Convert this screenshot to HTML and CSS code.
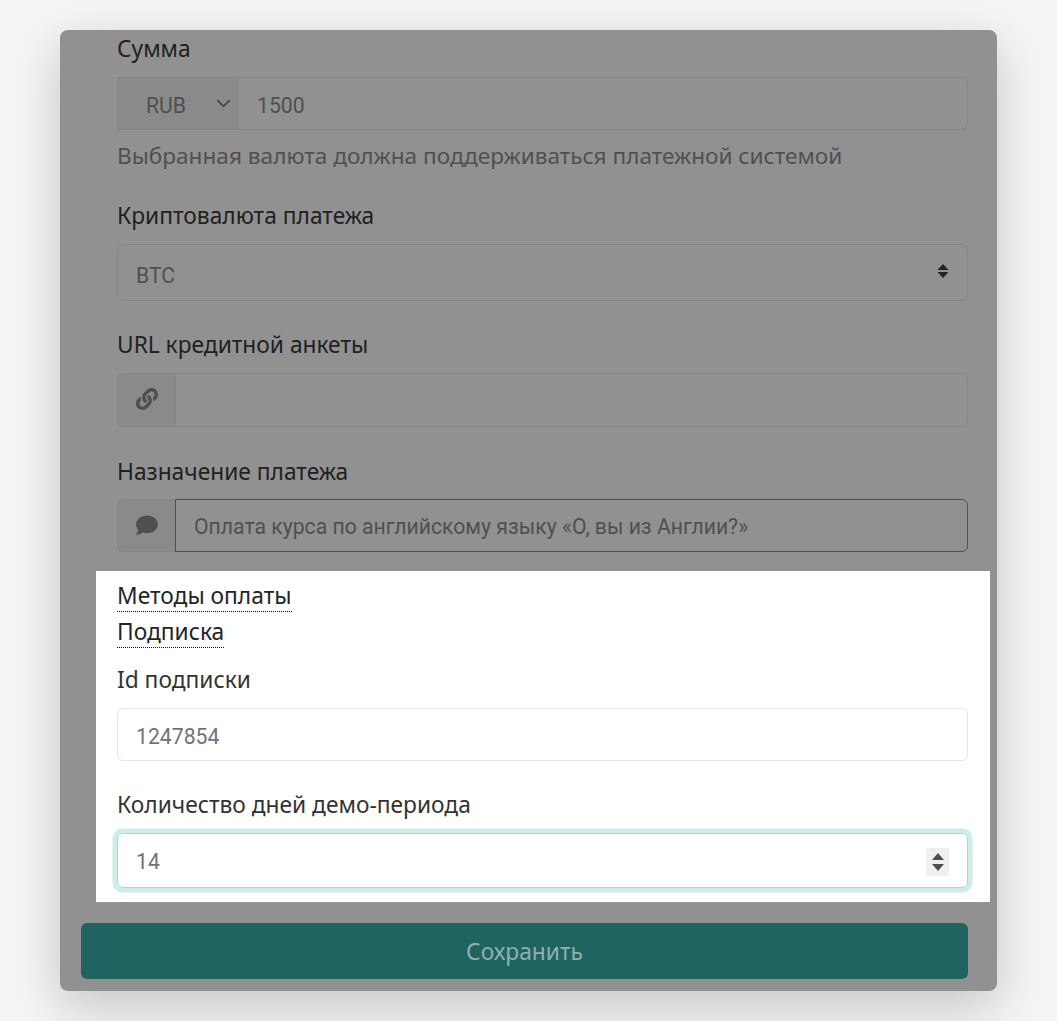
FILE: index.html
```html
<!DOCTYPE html>
<html lang="ru">
<head>
<meta charset="utf-8">
<title>Платеж</title>
<link rel="stylesheet" href="styles.css">
</head>
<body>
<main class="card">
  <section class="dim">
    <div class="field first">
      <div class="label">Сумма</div>
      <div class="group g-amount">
        <div class="addon currency"><span>RUB</span>
          <svg class="chev" viewBox="0 0 16 16" width="16" height="16"><path d="M2 5l6 6 6-6" fill="none" stroke="#4f4f4f" stroke-width="2.400" stroke-linecap="round" stroke-linejoin="round"/></svg>
        </div>
        <div class="input joined low">1500</div>
      </div>
      <div class="help">Выбранная валюта должна поддерживаться платежной системой</div>
    </div>
    <div class="field f-crypto">
      <div class="label">Криптовалюта платежа</div>
      <div class="select-box"><span class="select-value">BTC</span>
        <svg class="updown" viewBox="0 0 12 16" width="12" height="16"><path d="M6 1l5.500 6h-11zM6 15L.5 9h11z" fill="#222"/></svg>
      </div>
    </div>
    <div class="field f-url">
      <div class="label">URL кредитной анкеты</div>
      <div class="group g-url">
        <div class="addon icon">
          <svg viewBox="0 0 512 512" width="22" height="22"><path fill="#4f4f4f" d="M326.600 185.400c59.700 59.800 58.900 155.700.4 214.600l-.4.400-67.200 67.200c-59.300 59.300-155.700 59.300-215 0s-59.300-155.700 0-215l37.100-37.100c9.800-9.800 26.800-3.300 27.300 10.600.6 17.700 3.800 35.500 9.700 52.600 2 5.800.6 12.200-3.700 16.500l-13.100 13.100c-28 28-28.900 73.700-1.200 102 28 28.500 74 28.700 102.200.5l67.200-67.200c28.200-28.200 28.100-73.800 0-101.800-3.700-3.700-7.400-6.600-10.300-8.600a16 16 0 0 1-6.900-12.600c-.4-10.600 3.400-21.500 11.700-29.800l21.100-21.100c5.500-5.500 14.200-6.200 20.600-1.700 7.300 5.100 14.200 10.900 20.500 17.300zM467.500 44.400c-59.300-59.300-155.700-59.300-215 0l-67.200 67.200-.4.400c-58.600 58.900-59.400 154.800.4 214.600 6.400 6.400 13.200 12.200 20.500 17.300 6.400 4.500 15.100 3.800 20.600-1.700l21.100-21.100c8.300-8.300 12.100-19.200 11.700-29.800a16 16 0 0 0-6.900-12.600c-2.900-2-6.600-4.900-10.300-8.600-28.100-28-28.200-73.600 0-101.800l67.200-67.200c28.200-28.200 74.200-28 102.200.5 27.700 28.300 26.800 74-1.200 102l-13.100 13.100c-4.300 4.300-5.700 10.700-3.700 16.500 5.900 17.100 9.100 34.900 9.700 52.600.5 13.900 17.500 20.400 27.300 10.600l37.100-37.100c59.300-59.300 59.300-155.700 0-215z"/></svg>
        </div>
        <div class="input joined"></div>
      </div>
    </div>
    <div class="field f-purpose">
      <div class="label">Назначение платежа</div>
      <div class="group g-purpose">
        <div class="addon icon">
          <svg viewBox="0 0 512 512" width="22" height="22"><path fill="#4f4f4f" d="M256 32C114.600 32 0 125.100 0 240c0 49.600 21.400 95 57 130.700C44.500 421.100 2.700 466 2.200 466.500c-2.200 2.300-2.800 5.700-1.500 8.700S4.800 480 8 480c66.300 0 116-31.800 140.600-51.400 32.700 12.300 69 19.400 107.400 19.400 141.400 0 256-93.100 256-208S397.400 32 256 32z"/></svg>
        </div>
        <div class="input joined dark">Оплата курса по английскому языку «О, вы из Англии?»</div>
      </div>
    </div>
  </section>

  <section class="spot">
    <div class="links">
      <div class="link-row"><a class="toggle">Методы оплаты</a></div>
      <div class="link-row"><a class="toggle">Подписка</a></div>
    </div>
    <div class="spot-field s-id">
      <div class="label">Id подписки</div>
      <div class="input plain low">1247854</div>
    </div>
    <div class="spot-field s-days">
      <div class="label">Количество дней демо-периода</div>
      <div class="input focus"><span>14</span>
        <span class="spin"><i class="up"></i><i class="down"></i></span>
      </div>
    </div>
  </section>

  <div class="actions">
    <div class="save">Сохранить</div>
  </div>
</main>
</body>
</html>
```

FILE: styles.css
```css
* { box-sizing: border-box; }
html, body { margin: 0; padding: 0; }
body {
  height: 1021px;
  overflow: hidden;
  background: #f5f5f8;
  font-family: "Noto Sans", "Open Sans", sans-serif;
  font-size: 22.750px;
  line-height: 33px;
  color: #212121;
  padding: 30px 60px 0;
}
.card {
  width: 937px;
  height: 961px;
  background: #919191;
  border-radius: 8px;
  box-shadow: 0 16px 52px rgba(0, 0, 0, .2);
  display: flex;
  flex-direction: column;
}
.dim { padding: 2px 29px 0 57px; }
.label { height: 33px; }
.field.first .label { margin-bottom: 12px; }
.group { display: flex; }
.addon {
  background: #8a8a8a;
  border: 1px solid #858585;
  border-right: 0;
  color: #505050;
  font-family: Roboto, "Noto Sans", sans-serif;
  font-size: 21.200px;
  display: flex;
  align-items: center;
}
.input {
  flex: 1;
  display: flex;
  align-items: center;
  padding: 2px 18px 0;
  border: 1px solid #858585;
  border-radius: 6px;
  color: #505050;
  font-family: Roboto, "Noto Sans", sans-serif;
  font-size: 21.200px;
}
.low { padding-top: 4px; }
.joined { border-radius: 0 6px 6px 0; }
.g-amount { height: 53px; }
.currency {
  width: 121px;
  padding: 0 7px 0 28px;
  justify-content: space-between;
}
.currency span { margin-top: 3px; }
.chev { width: 15px; height: 15px; }
.help { margin-top: 9px; color: #505050; font-size: 22.600px; }
.f-crypto { margin-top: 27px; }
.f-crypto .label { margin-bottom: 12px; }
.select-box {
  height: 57px;
  border: 1px solid #858585;
  border-radius: 6px;
  display: flex;
  align-items: center;
  justify-content: space-between;
  padding: 0 19px 0 18px;
  color: #505050;
  font-family: Roboto, "Noto Sans", sans-serif;
  font-size: 21.200px;
}
.select-value { margin-top: 6px; }
.updown { margin-right: -1px; margin-top: -3px; }
.f-url { margin-top: 27px; }
.f-url .label { margin-bottom: 12px; }
.g-purpose { height: 53px; }
.g-url { height: 54px; }
.icon {
  width: 58px;
  justify-content: center;
  border-radius: 6px 0 0 6px;
}
.f-purpose { margin-top: 28px; }
.f-purpose .label { margin-bottom: 11px; }
.dark { border-color: #4f4f4f; }
.g-purpose .addon svg { margin-top: -2px; }
.g-url .addon svg { margin-top: -2px; }
.spot {
  width: 894px;
  height: 331px;
  margin: 19px 0 0 36px;
  background: #fff;
  padding: 8px 22px 0 21px;
}
.link-row { height: 36px; }
.toggle {
  color: #212529;
  border-bottom: 1px dotted #111;
  display: inline-block;
  line-height: 30px;
}
.s-id { margin-top: 12px; }
.spot-field .label { color: #333; margin-bottom: 12px; }
.plain { height: 53px; border-color: #e6e6e6; color: #6f7378; }
.s-days { margin-top: 27px; }
.focus {
  height: 55px;
  justify-content: space-between;
  border: 1px solid #a3dad6;
  color: #6f7378;
  box-shadow: 0 0 0 4.500px #cdecea;
}
.spin {
  width: 23px;
  height: 28px;
  background: #f0f0f0;
  display: flex;
  flex-direction: column;
  align-items: center;
  justify-content: center;
  gap: 4px;
}
.up, .down { width: 0; height: 0; border-left: 6px solid transparent; border-right: 6px solid transparent; }
.up { border-bottom: 7px solid #505050; }
.down { border-top: 7px solid #505050; }
.actions { padding: 21px 29px 0 21px; }
.save {
  height: 56px;
  background: #206461;
  border-radius: 6px;
  color: #8fb0ad;
  display: flex;
  align-items: center;
  justify-content: center;
}
```
